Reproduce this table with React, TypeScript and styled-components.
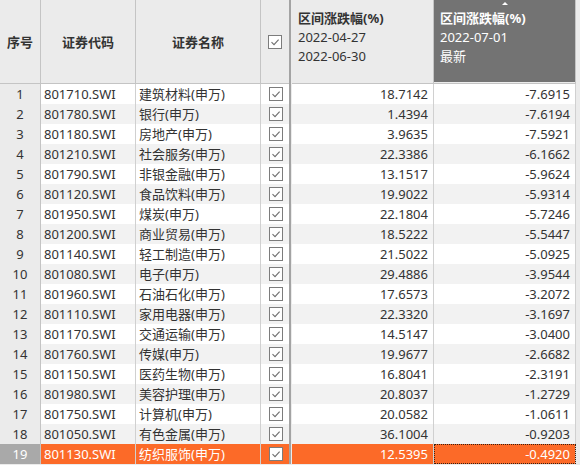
import React from "react";
import styled, { createGlobalStyle, css } from "styled-components";

const Global = createGlobalStyle`
  html, body { margin: 0; padding: 0; background: #ebebeb; }
  body { font-family: "Noto Sans", "Noto Sans CJK SC", sans-serif; font-size: 13px; color: #333; }
`;

const COLS = "41px 95px 125px 28px 3px 142px 142px 1fr";

const Table = styled.div`
  width: 580px;
  height: 465px;
  background: #ebebeb;
  overflow: hidden;
`;

const HeaderRow = styled.div`
  display: grid;
  grid-template-columns: ${COLS};
  height: 84px;
`;

const HeadCell = styled.div<{ $align?: "center" | "left"; $noBorder?: boolean }>`
  position: relative;
  box-sizing: border-box;
  border-right: ${(p) => (p.$noBorder ? "0" : "1px solid #c4c4c4")};
  border-bottom: 1px solid #c4c4c4;
  background: #ebebeb;
  display: flex;
  flex-direction: column;
  font-weight: 700;
  color: #333;
  ${(p) =>
    p.$align === "left"
      ? css`
          justify-content: flex-start;
          align-items: flex-start;
          padding: 9px 0 0 6px;
        `
      : css`
          justify-content: center;
          align-items: center;
        `}
`;

const DarkFill = styled.div`
  position: absolute;
  inset: 0 0 1px 0;
  background: #737373;
`;

const HeadContent = styled.div<{ $dark?: boolean }>`
  position: relative;
  display: flex;
  flex-direction: column;
  line-height: 19px;
  color: ${(p) => (p.$dark ? "#fff" : "#333")};
`;

const HeadSub = styled.span`
  font-weight: 400;
`;

const SortArrow = styled.div`
  position: absolute;
  top: 2px;
  left: 50%;
  margin-left: -3px;
  width: 0;
  height: 0;
  border-left: 3px solid transparent;
  border-right: 3px solid transparent;
  border-bottom: 3px solid #fff;
`;

const Separator = styled.div`
  background: #ebebeb;
  border-left: 2px solid #a3a3a3;
  box-sizing: border-box;
`;

const Filler = styled.div`
  background: #ebebeb;
`;

const Row = styled.div<{ $alt: boolean; $sel: boolean }>`
  display: grid;
  grid-template-columns: ${COLS};
  height: 20px;
  line-height: 20px;
  background: ${(p) => (p.$sel ? "#fc6a28" : p.$alt ? "#f2f2f2" : "#ffffff")};
  color: ${(p) => (p.$sel ? "#fff" : "#333")};
`;

const Cell = styled.div<{ $align?: "left" | "right" | "center"; $focus?: boolean }>`
  box-sizing: border-box;
  border-right: 1px solid #d0d0d0;
  text-align: ${(p) => p.$align || "left"};
  padding: ${(p) => (p.$align === "right" ? "0 5px 0 0" : p.$align === "center" ? "0" : "0 0 0 3px")};
  white-space: nowrap;
  overflow: hidden;
  ${(p) =>
    p.$focus &&
    css`
      outline: 1px dotted #3a2010;
      outline-offset: -1px;
    `}
`;

const IndexCell = styled(Cell)<{ $sel: boolean }>`
  background: ${(p) => (p.$sel ? "#a9a9a9" : "#ebebeb")};
  color: ${(p) => (p.$sel ? "#fff" : "#333")};
  border-right: 1px solid #c4c4c4;
`;

const CheckCell = styled.div`
  display: flex;
  align-items: center;
  justify-content: center;
  padding-left: 1px;
`;

const Box = styled.span`
  box-sizing: border-box;
  width: 14px;
  height: 14px;
  border: 1px solid #7c7c7c;
  background: #fff;
  display: flex;
  align-items: center;
  justify-content: center;
`;

const Check = () => (
  <Box>
    <svg width="10" height="10" viewBox="0 0 10 10">
      <path d="M1.5 5.2 L4 7.6 L8.6 2.6" fill="none" stroke="#6e6e6e" strokeWidth="1.1" />
    </svg>
  </Box>
);

const data: [string, string, string, string][] = [
  ["801710.SWI", "建筑材料(申万)", "18.7142", "-7.6915"],
  ["801780.SWI", "银行(申万)", "1.4394", "-7.6194"],
  ["801180.SWI", "房地产(申万)", "3.9635", "-7.5921"],
  ["801210.SWI", "社会服务(申万)", "22.3386", "-6.1662"],
  ["801790.SWI", "非银金融(申万)", "13.1517", "-5.9624"],
  ["801120.SWI", "食品饮料(申万)", "19.9022", "-5.9314"],
  ["801950.SWI", "煤炭(申万)", "22.1804", "-5.7246"],
  ["801200.SWI", "商业贸易(申万)", "18.5222", "-5.5447"],
  ["801140.SWI", "轻工制造(申万)", "21.5022", "-5.0925"],
  ["801080.SWI", "电子(申万)", "29.4886", "-3.9544"],
  ["801960.SWI", "石油石化(申万)", "17.6573", "-3.2072"],
  ["801110.SWI", "家用电器(申万)", "22.3320", "-3.1697"],
  ["801170.SWI", "交通运输(申万)", "14.5147", "-3.0400"],
  ["801760.SWI", "传媒(申万)", "19.9677", "-2.6682"],
  ["801150.SWI", "医药生物(申万)", "16.8041", "-2.3191"],
  ["801980.SWI", "美容护理(申万)", "20.8037", "-1.2729"],
  ["801750.SWI", "计算机(申万)", "20.0582", "-1.0611"],
  ["801050.SWI", "有色金属(申万)", "36.1004", "-0.9203"],
  ["801130.SWI", "纺织服饰(申万)", "12.5395", "-0.4920"],
];

export default function App() {
  return (
    <Table>
      <Global />
      <HeaderRow>
        <HeadCell>序号</HeadCell>
        <HeadCell>证券代码</HeadCell>
        <HeadCell>证券名称</HeadCell>
        <HeadCell $noBorder>
          <Check />
        </HeadCell>
        <Separator />
        <HeadCell $align="left">
          <HeadContent>
            <span>区间涨跌幅(%)</span>
            <HeadSub>2022-04-27</HeadSub>
            <HeadSub>2022-06-30</HeadSub>
          </HeadContent>
        </HeadCell>
        <HeadCell $align="left">
          <DarkFill />
          <SortArrow />
          <HeadContent $dark>
            <span>区间涨跌幅(%)</span>
            <HeadSub>2022-07-01</HeadSub>
            <HeadSub>最新</HeadSub>
          </HeadContent>
        </HeadCell>
        <Filler />
      </HeaderRow>
      {data.map(([code, name, v1, v2], i) => {
        const sel = i === data.length - 1;
        return (
          <Row key={code} $alt={i % 2 === 1} $sel={sel}>
            <IndexCell $align="center" $sel={sel}>
              {i + 1}
            </IndexCell>
            <Cell>{code}</Cell>
            <Cell>{name}</Cell>
            <CheckCell>
              <Check />
            </CheckCell>
            <Separator />
            <Cell $align="right">{v1}</Cell>
            <Cell $align="right" $focus={sel}>
              {v2}
            </Cell>
            <Filler />
          </Row>
        );
      })}
    </Table>
  );
}
